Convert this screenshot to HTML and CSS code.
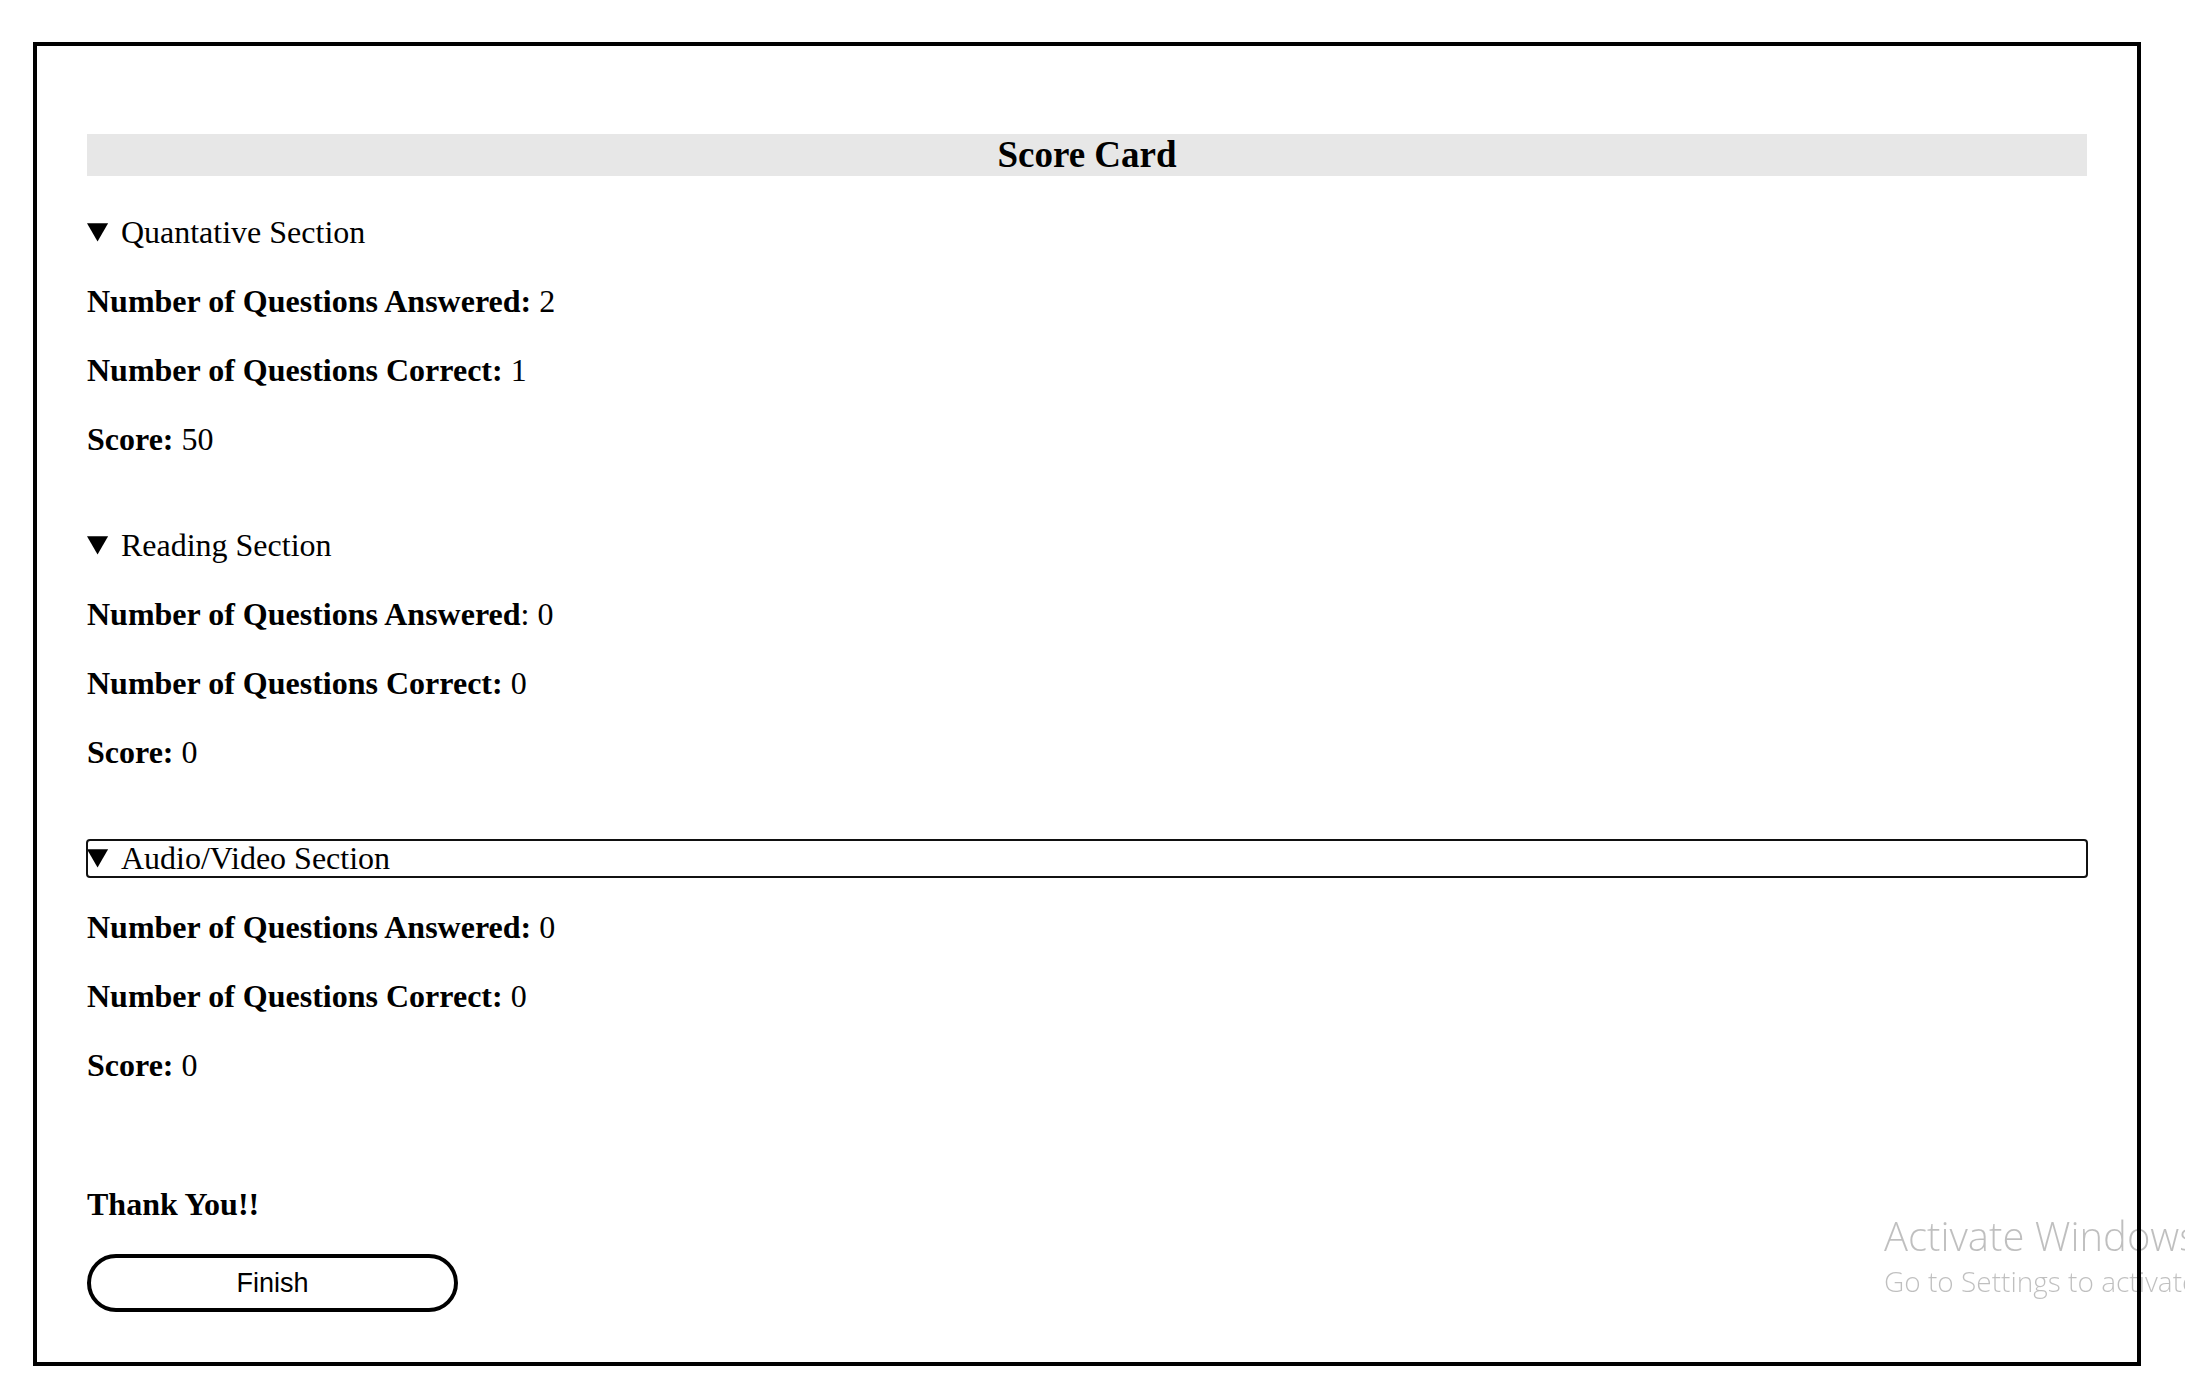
FILE: index.html
```html
<!DOCTYPE html>
<html lang="en">
<head>
<meta charset="utf-8">
<title>Score Card</title>
<link rel="stylesheet" href="styles.css">
</head>
<body>
<div class="card">
  <h2 class="title">Score Card</h2>

  <details class="section" open>
    <summary class="section-head">Quantative Section</summary>
    <p class="row"><b>Number of Questions Answered:</b> 2</p>
    <p class="row"><b>Number of Questions Correct:</b> 1</p>
    <p class="row"><b>Score:</b> 50</p>
  </details>

  <details class="section" open>
    <summary class="section-head">Reading Section</summary>
    <p class="row"><b>Number of Questions Answered</b>: 0</p>
    <p class="row"><b>Number of Questions Correct:</b> 0</p>
    <p class="row"><b>Score:</b> 0</p>
  </details>

  <details class="section" open>
    <summary class="section-head is-focused">Audio/Video Section</summary>
    <p class="row"><b>Number of Questions Answered:</b> 0</p>
    <p class="row"><b>Number of Questions Correct:</b> 0</p>
    <p class="row"><b>Score:</b> 0</p>
  </details>

  <p class="thanks">Thank You!!</p>
  <button class="finish" type="button">Finish</button>
</div>

<div class="watermark">
  <div class="wm-title">Activate Windows</div>
  <div class="wm-sub">Go to Settings to activate Windows.</div>
</div>
</body>
</html>
```

FILE: styles.css
```css
html {
  overflow: hidden;
}

body {
  margin: 0;
  background: #ffffff;
  color: #000000;
  font-family: "Liberation Serif", "Times New Roman", serif;
  font-size: 32px;
}

.card {
  margin: 42px 44px 0 33px;
  border: 4px solid #000000;
  padding: 88px 50px 50px 50px;
}

.title {
  margin: 0 0 38px;
  height: 42px;
  line-height: 42px;
  background: #e7e7e7;
  text-align: center;
  font-size: 37px;
  font-weight: bold;
}

.section {
  display: block;
  margin: 0 0 69px;
}

.section-head {
  line-height: 37px;
  cursor: pointer;
}

.section-head.is-focused {
  outline: 2px solid #111111;
  outline-offset: -1px;
  border-radius: 3px;
}

.row {
  margin: 32px 0 0;
  line-height: 37px;
}

.thanks {
  margin: 102px 0 0;
  line-height: 37px;
  font-weight: bold;
}

.finish {
  display: block;
  margin-top: 31px;
  width: 371px;
  height: 58px;
  box-sizing: border-box;
  border: 4px solid #000000;
  border-radius: 29px;
  background: #ffffff;
  color: #000000;
  font-family: "Liberation Sans", Arial, sans-serif;
  font-size: 27px;
  padding: 0;
}

.watermark {
  position: fixed;
  left: 1884px;
  top: 1214px;
  white-space: nowrap;
  color: rgba(0, 0, 0, 0.25);
  font-family: "Open Sans", "Noto Sans", sans-serif;
  font-weight: 300;
  pointer-events: none;
}

.wm-title {
  font-size: 40px;
  line-height: 44px;
}

.wm-sub {
  margin-top: 1px;
  font-size: 28px;
  line-height: 45px;
}
```
